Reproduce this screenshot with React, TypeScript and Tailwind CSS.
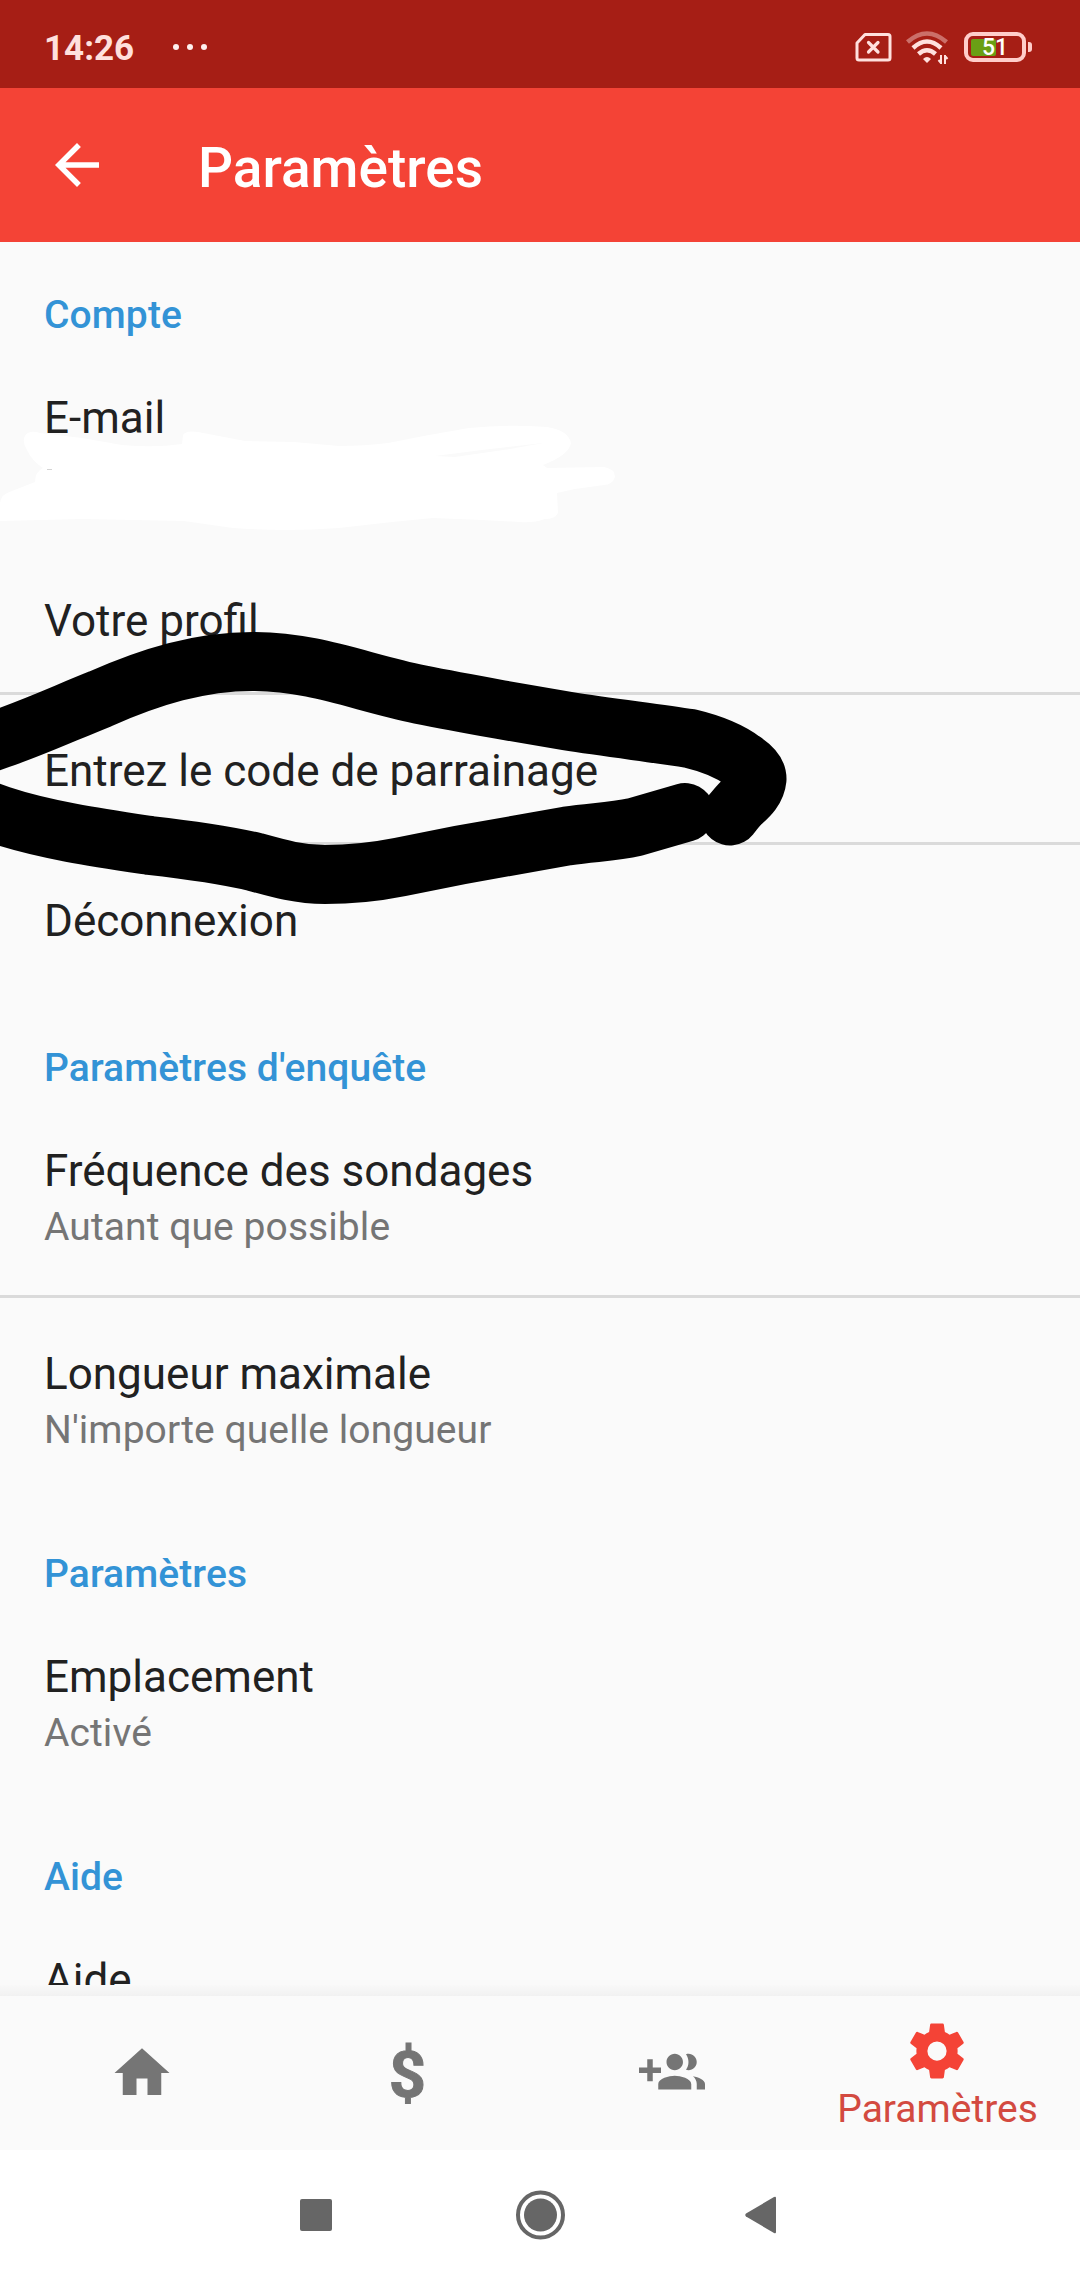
import React from "react";

type Item = { title: string; detail?: string; divider?: boolean };
type Section = { heading: string; items: Item[] };

const sections: Section[] = [
  {
    heading: "Compte",
    items: [
      { title: "E-mail", detail: "\u00a0" },
      { title: "Votre profil", divider: true },
      { title: "Entrez le code de parrainage", divider: true },
      { title: "Déconnexion" },
    ],
  },
  {
    heading: "Paramètres d'enquête",
    items: [
      { title: "Fréquence des sondages", detail: "Autant que possible", divider: true },
      { title: "Longueur maximale", detail: "N'importe quelle longueur" },
    ],
  },
  { heading: "Paramètres", items: [{ title: "Emplacement", detail: "Activé" }] },
  { heading: "Aide", items: [{ title: "Aide" }] },
];

function StatusBar() {
  return (
    <header className="flex h-[88px] shrink-0 items-center bg-[#a61e15] pl-[44px] pr-[48px] text-[#ffe0dd]">
      <span className="mt-[9px] text-[35px] leading-[42px] font-bold">14:26</span>
      <div className="ml-[39px] mt-[6px] flex gap-2">
        <i className="size-[6px] rounded-full bg-[#fff0ee]" />
        <i className="size-[6px] rounded-full bg-[#fff0ee]" />
        <i className="size-[6px] rounded-full bg-[#fff0ee]" />
      </div>
      <div className="ml-auto mt-[6px] flex items-center">
        <svg width="38" height="30" viewBox="0 0 38 30" fill="none" stroke="currentColor" strokeWidth="3">
          <path d="M11 2.5H34a2 2 0 0 1 2 2V26a2 2 0 0 1-2 2H5a2 2 0 0 1-2-2V11z" strokeLinejoin="round" />
          <path d="M14.500 10.500l9.500 9.500M24 10.500L14.500 20" strokeWidth="3.200" strokeLinecap="round" />
        </svg>
        <svg className="ml-[13px]" width="46" height="34" viewBox="0 0 46 34" fill="none" stroke="currentColor">
          <path d="M2.500 12Q22 -5 41.500 12" strokeWidth="4.500" opacity=".42" />
          <path d="M8 18Q22 5 36 18" strokeWidth="4.500" />
          <path d="M13.500 24Q22 16.500 30.500 24" strokeWidth="4.500" />
          <path d="M18 29Q22 25 26 29L22 33z" fill="currentColor" stroke="none" />
          <path d="M36 25v9M33.500 30l2.500 3M40 34v-9M42.500 29L40 26" strokeWidth="2" />
        </svg>
        <div className="ml-[13px] flex h-[30px] w-[62px] items-center rounded-[9px] border-4 border-[#ffcdca] pl-[3px]">
          <div className="flex h-[17px] w-[25px] items-center rounded-[2px] bg-[#6a9f15] pl-[11px]">
            <span className="pt-px text-[23px] leading-[17px] font-medium text-white">51</span>
          </div>
        </div>
        <i className="ml-[2px] h-[10px] w-[4px] rounded-r-[3px] bg-[#ffcdca]" />
      </div>
    </header>
  );
}

function AppBar() {
  return (
    <div className="flex h-[154px] shrink-0 items-center bg-[#f44336] pl-[44px] text-white">
      <svg width="66" height="66" viewBox="0 0 24 24" fill="currentColor">
        <path d="M20 11H7.830l5.590-5.590L12 4l-8 8 8 8 1.410-1.410L7.830 13H20z" />
      </svg>
      <h1 className="ml-[88px] mt-[6px] text-[55px] leading-[64px] font-medium">Paramètres</h1>
    </div>
  );
}

function Row({ title, detail, divider }: Item) {
  return (
    <div
      className={
        (detail ? "h-[203px]" : "h-[150px]") +
        " shrink-0 border-b-3 pl-[44px] pt-[50px] " +
        (divider ? "border-[#dadada]" : "border-transparent")
      }
    >
      <p className="text-[44px] leading-[52px] text-[#212121]">{title}</p>
      {detail && <p className="mt-[8px] text-[39px] leading-[45px] tracking-[0.08px] text-[#757575]">{detail}</p>}
    </div>
  );
}

/* Freehand marks drawn over the list: white cover and black loop. */
function Marks() {
  return (
    <svg className="pointer-events-none absolute left-0 top-0" width="800" height="920" viewBox="0 0 800 920">
      <path
        fill="#fff"
        fillRule="evenodd"
        d="M24 438Q27 429 40 433L82 438L122 445Q155 448 182 444L183 435Q186 430 198 432L245 441L294 442L339 446Q365 446 388 443L429 435L469 428Q506 424 547 427Q568 430 571 443Q569 455 543 465L547 468L604 467Q615 469 615 477Q612 485 604 485L575 489L557 493L558 513Q555 519 545 519Q534 523 520 522L482 520L433 518L392 522L339 528Q286 532 233 528L184 521L82 519L0 521V503Q1 494 12 491L35 482Q35 472 43 468Q32 461 27 450Q23 444 24 438ZM435 456L482 450L543 443L510 449L455 457Z"
      />
      <path d="M47 469.500h5" stroke="#d4d4d4" />
      <path
        fill="none"
        stroke="#000"
        strokeWidth="59"
        strokeLinecap="round"
        strokeLinejoin="round"
        d="M-20 746L0 739C35 727 65 713 100 699C150 677 200 661 255 661.500C315 662 360 682 420 694.500C450 700.500 475 705 500 709.500L567 721C612 728 655 733 690 738.500C713 744 731 752 743 761C754 768 757 773 757 779C756 789 749 796 742 802C737 807 734 811 730 816"
      />
      <path
        fill="none"
        stroke="#000"
        strokeWidth="59"
        strokeLinecap="round"
        strokeLinejoin="round"
        d="M-20 808L0 815C45 830 100 838 150 845.500C190 850 225 855 255 862C280 869 300 874.500 325 874.500C355 874.500 375 872 400 867L460 855L567 836C595 832 612 832 635 827L685 812.500"
      />
    </svg>
  );
}

function BottomNav() {
  return (
    <nav className="z-10 grid h-[154px] shrink-0 grid-cols-4 bg-[#fafafa] pl-[9.500px] pr-[11px] text-[#757575]">
      <div className="flex items-center justify-center">
        <svg width="66" height="66" viewBox="0 0 24 24" fill="currentColor">
          <path d="M10 20v-6h4v6h5v-8h3L12 3 2 12h3v8z" />
        </svg>
      </div>
      <div className="flex items-center justify-center pl-px pt-[3px] text-[65px] leading-[66px] font-bold [-webkit-text-stroke:1px_#757575]">
        $
      </div>
      <div className="flex items-center justify-center">
        <svg width="66" height="66" viewBox="0 0 24 24" fill="currentColor">
          <path d="M8 10H5V7H3v3H0v2h3v3h2v-3h3v-2zm10 1c1.660 0 2.990-1.340 2.990-3S19.660 5 18 5c-.32 0-.63.05-.91.14.57.81.9 1.790.9 2.860s-.34 2.040-.9 2.860c.28.09.59.14.91.14zm-5 0c1.660 0 2.990-1.340 2.990-3S14.660 5 13 5c-1.660 0-3 1.340-3 3s1.340 3 3 3zm6.620 2.160c.83.73 1.380 1.660 1.380 2.840v2h3v-2c0-1.540-2.370-2.490-4.380-2.840zM13 13c-2 0-6 1-6 3v2h12v-2c0-2-4-3-6-3z" />
        </svg>
      </div>
      <div className="flex flex-col items-center pt-[22px]">
        <svg className="text-[#f44336]" width="66" height="66" viewBox="0 0 24 24" fill="currentColor">
          <path d="M12,15.5A3.5,3.5 0 0,1 8.5,12A3.5,3.5 0 0,1 12,8.5A3.5,3.5 0 0,1 15.5,12A3.5,3.5 0 0,1 12,15.5M19.43,12.97C19.47,12.65 19.5,12.33 19.5,12C19.5,11.67 19.47,11.34 19.43,11L21.54,9.37C21.73,9.22 21.78,8.95 21.66,8.73L19.66,5.27C19.54,5.05 19.27,4.96 19.05,5.05L16.56,6.05C16.04,5.66 15.5,5.32 14.87,5.07L14.5,2.42C14.46,2.18 14.25,2 14,2H10C9.75,2 9.54,2.18 9.5,2.42L9.13,5.07C8.5,5.32 7.96,5.66 7.44,6.05L4.95,5.05C4.73,4.96 4.46,5.05 4.34,5.27L2.34,8.73C2.21,8.95 2.27,9.22 2.46,9.37L4.57,11C4.53,11.34 4.5,11.67 4.5,12C4.5,12.33 4.53,12.65 4.57,12.97L2.46,14.63C2.27,14.78 2.21,15.05 2.34,15.27L4.34,18.73C4.46,18.95 4.73,19.03 4.95,18.95L7.44,17.94C7.96,18.34 8.5,18.68 9.13,18.93L9.5,21.58C9.54,21.82 9.75,22 10,22H14C14.25,22 14.46,21.82 14.5,21.58L14.87,18.93C15.5,18.67 16.04,18.34 16.56,17.94L19.05,18.95C19.27,19.03 19.54,18.95 19.66,18.73L21.66,15.27C21.78,15.05 21.73,14.78 21.54,14.63L19.43,12.97Z" />
        </svg>
        <span className="mt-[3px] pl-[2px] text-[39px] leading-[45px] text-[#d34a40]">Paramètres</span>
      </div>
    </nav>
  );
}

function SystemNav() {
  return (
    <footer className="flex h-[130px] shrink-0 items-center pl-[300px] bg-white text-[#666]">
      <i className="size-[32px] rounded-[2px] bg-[#666]" />
      <svg className="ml-[183px]" width="50" height="50" viewBox="0 0 50 50">
        <circle cx="25.500" cy="25" r="22.500" fill="none" stroke="currentColor" strokeWidth="4" />
        <circle cx="25.500" cy="25" r="16.500" fill="currentColor" />
      </svg>
      <svg className="ml-[180px]" width="32" height="38" viewBox="0 0 32 38" fill="currentColor">
        <path d="M1 17.500L29 1Q31 0 31 2V36Q31 38 29 37L1 20.500Q-.5 19 1 17.500z" />
      </svg>
    </footer>
  );
}

export default function App() {
  return (
    <div className="relative flex h-[2280px] w-[1080px] flex-col overflow-hidden bg-[#fafafa] font-['Roboto',sans-serif]">
      <StatusBar />
      <AppBar />
      <main className="flex h-[1743px] shrink-0 flex-col overflow-hidden">
        {sections.map((section) => (
          <section key={section.heading} className="shrink-0">
            <h2 className="h-[100px] pl-[44px] pt-[51px] text-[39px] leading-[45px] font-medium tracking-[0.1px] text-[#3393d6]">
              {section.heading}
            </h2>
            {section.items.map((item) => (
              <Row key={item.title} {...item} />
            ))}
          </section>
        ))}
      </main>
      <div className="h-[11px] shrink-0 bg-linear-to-b from-[#f9f9f9] to-[#f1f1f1]" />
      <BottomNav />
      <SystemNav />
      <Marks />
    </div>
  );
}
